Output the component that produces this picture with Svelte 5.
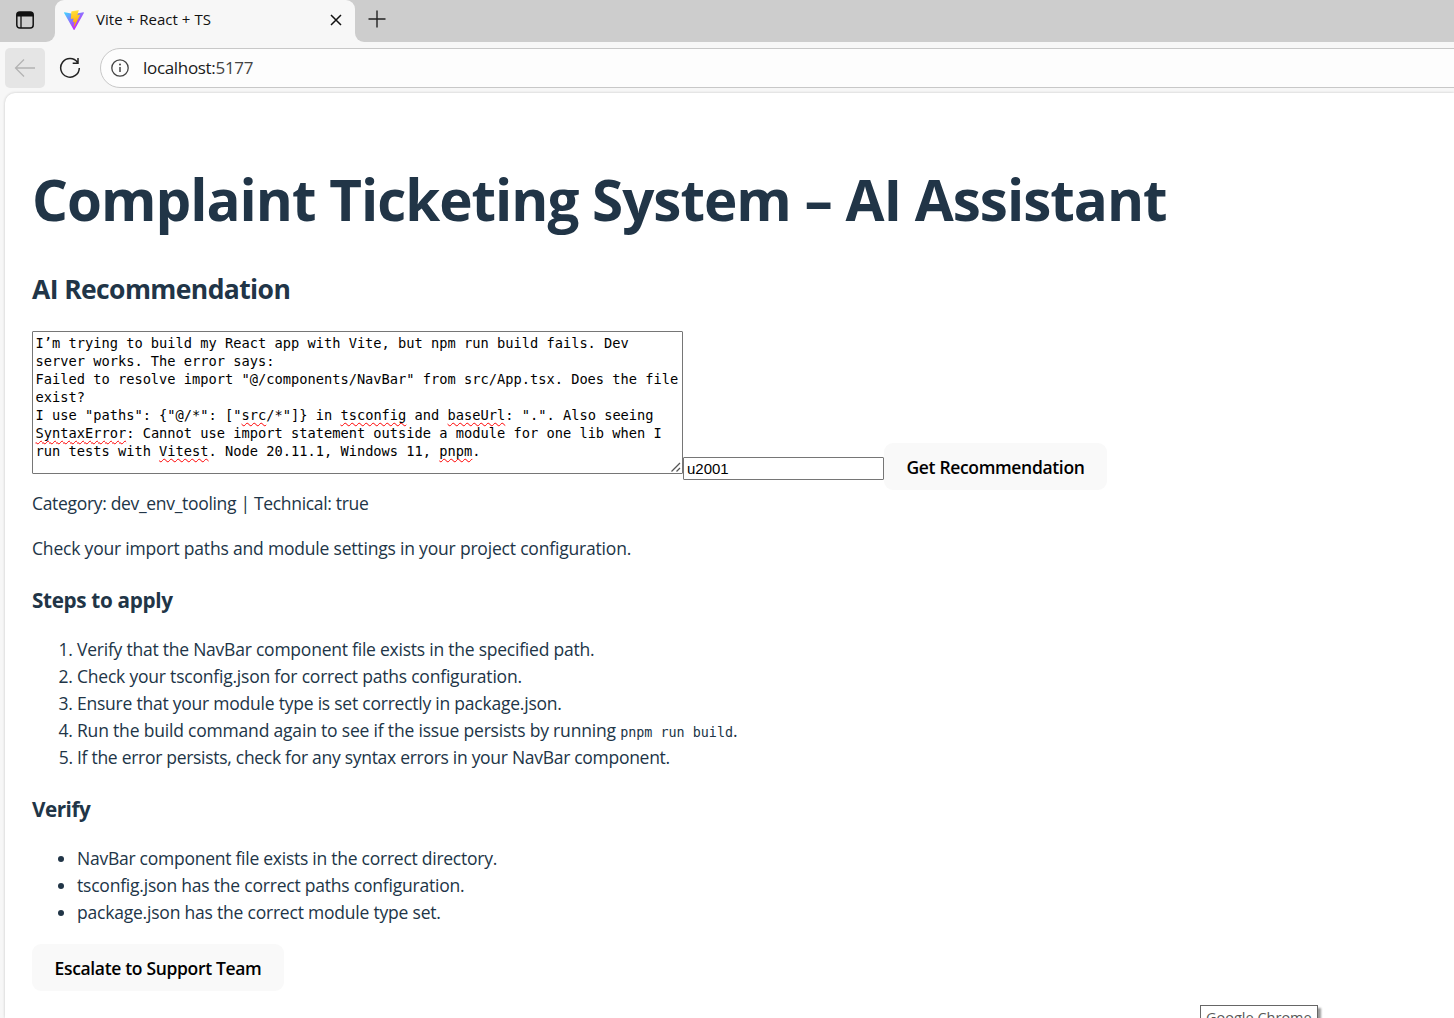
<script>
  const steps = [
    { text: 'Verify that the NavBar component file exists in the specified path.' },
    { text: 'Check your tsconfig.json for correct paths configuration.' },
    { text: 'Ensure that your module type is set correctly in package.json.' },
    { text: 'Run the build command again to see if the issue persists by running', code: 'pnpm run build' },
    { text: 'If the error persists, check for any syntax errors in your NavBar component.' }
  ];

  const checks = [
    'NavBar component file exists in the correct directory.',
    'tsconfig.json has the correct paths configuration.',
    'package.json has the correct module type set.'
  ];

  // Words inside [[ ]] are flagged by the spell checker.
  const message = [
    'I’m trying to build my React app with Vite, but npm run build fails. Dev',
    'server works. The error says:',
    'Failed to resolve import "@/components/NavBar" from src/App.tsx. Does the file',
    'exist?',
    'I use "paths": {"@/*": ["[[src]]/*"]} in [[tsconfig]] and [[baseUrl]]: ".". Also seeing',
    '[[SyntaxError]]: Cannot use import statement outside a module for one lib when I',
    'run tests with [[Vitest]]. Node 20.11.1, Windows 11, [[pnpm]].'
  ].map((line) => line.split(/\[\[|\]\]/).map((text, i) => ({ text, flagged: i % 2 === 1 })));
</script>

<div class="browser">
  <header class="tabstrip">
    <div class="workspace">
      <svg width="20" height="20" viewBox="0 0 20 20">
        <rect x="1.8" y="2" width="16.4" height="16" rx="3" fill="none" stroke="#111" stroke-width="1.5" />
        <path d="M1.8 6.4V5a3 3 0 0 1 3-3h10.4a3 3 0 0 1 3 3v1.4z" fill="#111" />
        <path d="M6 6v12" stroke="#111" stroke-width="1.3" />
      </svg>
    </div>
    <div class="tab">
      <svg class="vite" width="20" height="20" viewBox="0 0 256 257">
        <defs>
          <linearGradient id="shell" x1="0%" x2="57.6%" y1="7.7%" y2="78.4%">
            <stop offset="0%" stop-color="#41d1ff" /><stop offset="100%" stop-color="#bd34fe" />
          </linearGradient>
          <linearGradient id="bolt" x1="43.4%" x2="50.3%" y1="2.2%" y2="89%">
            <stop offset="0%" stop-color="#ffea83" /><stop offset="8.3%" stop-color="#ffdd35" /><stop offset="100%" stop-color="#ffa800" />
          </linearGradient>
        </defs>
        <path fill="url(#shell)" d="M255.153 37.938L134.897 252.976c-2.483 4.44-8.862 4.466-11.382.048L.875 37.958c-2.746-4.814 1.371-10.646 6.827-9.67l120.385 21.517a6.537 6.537 0 0 0 2.322-.004l117.867-21.483c5.438-.991 9.574 4.796 6.877 9.62Z" />
        <path fill="url(#bolt)" d="M185.432.063L96.44 17.501a3.268 3.268 0 0 0-2.634 3.014l-5.474 92.456a3.268 3.268 0 0 0 3.997 3.378l24.777-5.718c2.318-.535 4.413 1.507 3.936 3.838l-7.361 36.047c-.495 2.426 1.782 4.5 4.151 3.78l15.304-4.649c2.372-.72 4.652 1.36 4.15 3.788l-11.698 56.621c-.732 3.542 3.979 5.473 5.943 2.437l1.313-2.028l72.516-144.72c1.215-2.423-.88-5.186-3.54-4.672l-25.505 4.922c-2.396.462-4.435-1.77-3.759-4.114l16.646-57.705c.677-2.35-1.37-4.583-3.769-4.113Z" />
      </svg>
      <span class="tab-title">Vite + React + TS</span>
      <svg class="close" width="12" height="12" viewBox="0 0 12 12">
        <path d="M1 1l10 10M11 1L1 11" stroke="#111" stroke-width="1.5" />
      </svg>
    </div>
    <div class="new-tab">
      <svg width="18" height="18" viewBox="0 0 18 18">
        <path d="M9 .5v17M.5 9h17" stroke="#222" stroke-width="1.4" />
      </svg>
    </div>
  </header>

  <nav class="toolbar">
    <div class="back">
      <svg width="22" height="20" viewBox="0 0 22 20">
        <path d="M21 10H1.5M10 1.5L1.5 10l8.500 8.500" fill="none" stroke="#b3b3b3" stroke-width="1.3" />
      </svg>
    </div>
    <svg class="reload" width="22" height="22" viewBox="0 0 22 22">
      <path d="M18.600 5.500A9.300 9.300 0 1 0 20.300 11M19 1v5.300h-5.300" fill="none" stroke="#222" stroke-width="1.5" />
    </svg>
    <div class="address">
      <svg width="18" height="18" viewBox="0 0 18 18">
        <circle cx="9" cy="9" r="8.200" fill="none" stroke="#444" stroke-width="1.3" />
        <path d="M9 8v5" stroke="#444" stroke-width="1.500" />
        <circle cx="9" cy="5.500" r="1" fill="#444" />
      </svg>
      <span class="host">localhost:<span class="port">5177</span></span>
    </div>
  </nav>

  <main class="page">
    <h1>Complaint Ticketing System – AI Assistant</h1>
    <h2>AI Recommendation</h2>

    <div class="form-row">
      <div class="message" role="textbox" aria-multiline="true">
        {#each message as line}
          <div class="line">{#each line as part}{#if part.flagged}<span class="flagged">{part.text}</span>{:else}{part.text}{/if}{/each}</div>
        {/each}
        <svg class="grip" width="10" height="10" viewBox="0 0 10 10">
          <path d="M.5 9.500L9 1M5.500 9.500L9 6" stroke="#555" stroke-width="1.300" />
        </svg>
      </div>
      <input type="text" value="u2001" />
      <button class="recommend">Get Recommendation</button>
    </div>

    <p class="category">Category: dev_env_tooling | Technical: true</p>
    <p class="summary">Check your import paths and module settings in your project configuration.</p>

    <h3>Steps to apply</h3>
    <ol class="steps">
      {#each steps as step}
        <li>{step.text}{#if step.code}{' '}<code>{step.code}</code>.{/if}</li>
      {/each}
    </ol>

    <h3 class="verify">Verify</h3>
    <ul class="checks">
      {#each checks as check}
        <li>{check}</li>
      {/each}
    </ul>

    <button class="escalate">Escalate to Support Team</button>
  </main>
  <div class="tooltip">Google Chrome</div>
</div>

<style>
  :global(body) { overflow: hidden; }
  .browser {
    position: relative;
    display: flex;
    flex-direction: column;
    height: 1018px;
    overflow: hidden;
    background: #f7f7f7;
    font-family: 'Open Sans', 'Noto Sans', sans-serif;
    color: #213547;
  }
  svg { display: block; flex: none; }

  .tabstrip {
    display: flex;
    height: 42px;
    flex: none;
    background: #f7f7f7;
  }
  .workspace {
    width: 55px;
    box-sizing: border-box;
    padding: 10px 0 0 15px;
    background: #cdcdcd;
    border-bottom-right-radius: 9px;
  }
  .tab {
    display: flex;
    align-items: center;
    width: 300px;
    height: 40px;
    box-sizing: border-box;
    padding: 0 13px 0 9px;
    background: #f7f7f7;
    border-radius: 9px 9px 0 0;
    box-shadow: 0 -9px 0 #cdcdcd;
    color: #111;
  }
  .tab-title { flex: 1; margin-left: 12px; padding-bottom: 2px; font-size: 15px; letter-spacing: 0.04px; white-space: nowrap; }
  .new-tab {
    flex: 1;
    box-sizing: border-box;
    height: 42px;
    padding: 10px 0 0 13px;
    background: #cdcdcd;
    border-bottom-left-radius: 9px;
  }

  .toolbar {
    display: flex;
    align-items: center;
    height: 51px;
    flex: none;
    padding-left: 5px;
  }
  .back {
    display: flex;
    align-items: center;
    justify-content: center;
    width: 40px;
    height: 40px;
    border-radius: 5px;
    background: #e5e5e5;
  }
  .reload { margin: 0 19px 0 14px; }
  .address {
    display: flex;
    align-items: center;
    flex: 1;
    height: 40px;
    box-sizing: border-box;
    margin-right: -30px;
    padding-left: 10px;
    border: 1px solid #c8c8c8;
    border-radius: 20px;
    background: #fdfdfd;
  }
  .host { margin-left: 14px; font-size: 17px; letter-spacing: -0.32px; color: #1a1a1a; }
  .port { color: #444; }

  .page {
    flex: 1;
    margin-left: 5px;
    padding: 75px 0 0 27px;
    background: #fff;
    border-top-left-radius: 10px;
    box-shadow: 0 0 3px rgba(0, 0, 0, 0.2);
    font-size: 17.5px;
    line-height: 27px;
    white-space: nowrap;
  }
  h1, h2, h3, p, ol, ul { margin: 0; }
  h1 { font-size: 56.5px; line-height: 64px; letter-spacing: -1px; }
  h2 { margin-top: 37px; font-size: 26.5px; line-height: 40px; letter-spacing: -0.6px; }
  h3 { margin-top: 22px; font-size: 20.7px; line-height: 32px; letter-spacing: -0.33px; }
  .verify { letter-spacing: -0.5px; }

  .form-row { display: flex; align-items: flex-end; height: 159px; margin-top: 22px; }
  .message {
    position: relative;
    width: 651px;
    height: 143px;
    box-sizing: border-box;
    margin-bottom: 16px;
    padding: 2px 2px 0 2.5px;
    border: 1px solid #767676;
    border-radius: 1px;
    color: #000;
    font: 13.7px/18px 'DejaVu Sans Mono', 'Liberation Mono', monospace;
    white-space: pre;
  }
  .line { height: 18px; }
  .flagged { text-decoration: underline wavy #f00 1px; text-underline-offset: 2px; text-decoration-skip-ink: none; }
  .grip { position: absolute; right: 1px; bottom: 1px; }
  input {
    width: 201px;
    height: 23px;
    box-sizing: border-box;
    margin: 0 0 10px;
    padding: 1px 3px;
    border: 1px solid #767676;
    border-radius: 1px;
    background: #fff;
    color: #000;
    font: 15px 'Liberation Sans', Arial, sans-serif;
  }
  button {
    height: 47px;
    padding: 2px 0 0;
    border: 0;
    border-radius: 9px;
    background: #f9f9f9;
    color: #000;
    font: 600 17.5px/27px 'Open Sans', 'Noto Sans', sans-serif;
  }
  .recommend { width: 223px; letter-spacing: -0.34px; }
  .escalate { display: block; width: 252px; margin-top: 18px; letter-spacing: -0.33px; }

  .category { letter-spacing: -0.32px; }
  .summary { margin-top: 18px; letter-spacing: -0.19px; }
  ol, ul { margin-top: 20px; padding-left: 45px; }
  li { letter-spacing: -0.21px; }
  .steps li:nth-child(1), .steps li:nth-child(3) { letter-spacing: -0.23px; }
  .steps li:nth-child(4) { letter-spacing: -0.19px; }
  .steps li:nth-child(5) { letter-spacing: -0.29px; }
  .checks li:nth-child(1) { letter-spacing: -0.255px; }
  code { font: 13.4px 'DejaVu Sans Mono', 'Liberation Mono', monospace; letter-spacing: 0; }

  .tooltip {
    position: absolute;
    left: 1200px;
    top: 1005px;
    width: 118px;
    height: 24px;
    box-sizing: border-box;
    padding-left: 5px;
    border: 1px solid #666;
    background: #fff;
    box-shadow: 3px 3px 2px rgba(0, 0, 0, 0.4);
    color: #575757;
    font-size: 14.5px;
    line-height: 24px;
    white-space: nowrap;
  }
</style>
